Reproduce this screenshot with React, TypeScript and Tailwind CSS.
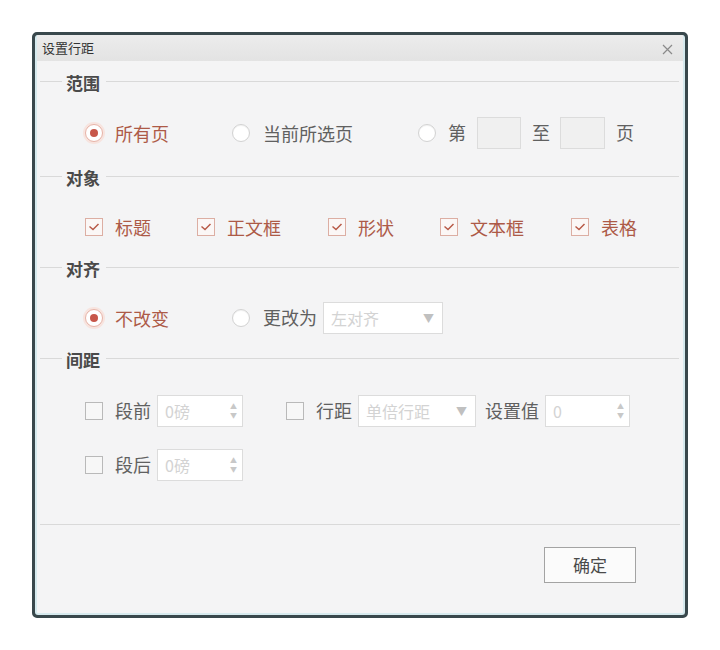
import type { ReactNode } from "react";

const font = { fontFamily: '"Noto Sans CJK SC", "Noto Sans", sans-serif' };

function Radio({ on }: { on?: boolean }) {
  return on ? (
    <span className="grid h-[18px] w-[18px] shrink-0 place-items-center rounded-full border border-[#e7b3a7] bg-white shadow-[0_0_0_2px_#f7e4df]">
      <span className="h-[8px] w-[8px] rounded-full bg-[#c7574a]" />
    </span>
  ) : (
    <span className="h-[18px] w-[18px] shrink-0 rounded-full border border-[#d2d2d2] bg-white shadow-[inset_0_1px_1px_rgba(0,0,0,0.06)]" />
  );
}

function Check({ on }: { on?: boolean }) {
  return (
    <span
      className={`grid h-[18px] w-[18px] shrink-0 place-items-center border ${
        on ? "border-[#dcaea3] bg-[#fbf7f6]" : "border-[#b9b9b9] bg-[#f7f7f7]"
      }`}
    >
      {on && (
        <svg width="12" height="10" viewBox="0 0 12 10" fill="none">
          <path d="M1.5 4.5 L5 7.5 L10.5 2" stroke="#b85a48" strokeWidth="1.5" />
        </svg>
      )}
    </span>
  );
}

function Section({ title }: { title: string }) {
  return (
    <div className="flex h-6 items-center">
      <div className="ml-[3px] h-px w-[22px] bg-[#d9d9d9]" />
      <span className="ml-[4px] mt-[3px] text-[17px] font-bold text-[#4a4a4a]">{title}</span>
      <div className="ml-[6px] mr-[4px] h-px flex-1 bg-[#d9d9d9]" />
    </div>
  );
}

function Spin({ value, w }: { value: string; w: string }) {
  return (
    <div className={`flex h-8 ${w} items-center justify-between border border-[#dcdcdc] bg-white pl-[7px] pr-[5px]`}>
      <span className="text-[16px] text-[#d3d3d3]">{value}</span>
      <span className="flex flex-col gap-[2px] text-[7px] leading-[7px] text-[#c8c8c8]">
        <span>▲</span>
        <span>▼</span>
      </span>
    </div>
  );
}

function Select({ value, w }: { value: string; w: string }) {
  return (
    <div className={`flex h-8 ${w} items-center justify-between border border-[#dcdcdc] bg-white pl-[7px] pr-[8px]`}>
      <span className="text-[16px] text-[#d3d3d3]">{value}</span>
      <span className="text-[11px] text-[#c0c0c0]">▼</span>
    </div>
  );
}

function Label({ children, red }: { children: ReactNode; red?: boolean }) {
  return <span className={`text-[18px] leading-none ${red ? "text-[#ad5a47]" : "text-[#606060]"}`}>{children}</span>;
}

export default function App() {
  return (
    <div className="min-h-[650px] bg-white pl-8 pt-8" style={font}>
      <div className="h-[586px] w-[656px] rounded-[5px] border-[3px] border-[#39484c] bg-[#39484c]">
        <div className="flex h-full flex-col overflow-hidden rounded-[3px] border-x-2 border-b-2 border-[#d6eaee] bg-[#f4f4f5]">
          <div className="flex h-[26px] items-center justify-between bg-gradient-to-b from-[#ececec] to-[#e3e3e3] pl-[5px] pr-[10px]">
            <span className="text-[13px] text-[#333]">设置行距</span>
            <svg width="11" height="11" viewBox="0 0 11 11" className="mt-[2px]">
              <path d="M1 1 L10 10 M10 1 L1 10" stroke="#8a8a8a" strokeWidth="1.2" />
            </svg>
          </div>

          <div className="flex flex-1 flex-col pt-[8px]">
            <Section title="范围" />
            <div className="mt-[24px] flex h-8 items-center pl-[48px]">
              <div className="flex w-[147px] items-center gap-[12px]">
                <Radio on />
                <Label red>所有页</Label>
              </div>
              <div className="flex w-[186px] items-center gap-[13px]">
                <Radio />
                <Label>当前所选页</Label>
              </div>
              <Radio />
              <span className="ml-[12px]"><Label>第</Label></span>
              <div className="ml-[11px] h-8 w-[44px] border border-[#dcdcdc] bg-[#f0f0f0]" />
              <span className="ml-[11px]"><Label>至</Label></span>
              <div className="ml-[10px] h-8 w-[45px] border border-[#dcdcdc] bg-[#f0f0f0]" />
              <span className="ml-[11px]"><Label>页</Label></span>
            </div>

            <div className="mt-[15px]">
              <Section title="对象" />
            </div>
            <div className="mt-[23px] flex h-8 items-center pl-[48px]">
              {[
                ["标题", "w-[112px]"],
                ["正文框", "w-[131px]"],
                ["形状", "w-[112px]"],
                ["文本框", "w-[131px]"],
                ["表格", ""],
              ].map(([t, w]) => (
                <div key={t} className={`flex items-center gap-[12px] ${w}`}>
                  <Check on />
                  <Label red>{t}</Label>
                </div>
              ))}
            </div>

            <div className="mt-[12px]">
              <Section title="对齐" />
            </div>
            <div className="mt-[23px] flex h-8 items-center pl-[48px]">
              <div className="flex w-[147px] items-center gap-[12px]">
                <Radio on />
                <Label red>不改变</Label>
              </div>
              <Radio />
              <span className="ml-[13px]"><Label>更改为</Label></span>
              <div className="ml-[6px]">
                <Select value="左对齐" w="w-[120px]" />
              </div>
            </div>

            <div className="mt-[12px]">
              <Section title="间距" />
            </div>
            <div className="mt-[25px] flex h-8 items-center pl-[48px]">
              <Check />
              <span className="ml-[12px]"><Label>段前</Label></span>
              <div className="ml-[6px]"><Spin value="0磅" w="w-[86px]" /></div>
              <div className="ml-[43px]"><Check /></div>
              <span className="ml-[12px]"><Label>行距</Label></span>
              <div className="ml-[6px]"><Select value="单倍行距" w="w-[118px]" /></div>
              <span className="ml-[9px]"><Label>设置值</Label></span>
              <div className="ml-[6px]"><Spin value="0" w="w-[85px]" /></div>
            </div>
            <div className="mt-[22px] flex h-8 items-center pl-[48px]">
              <Check />
              <span className="ml-[12px]"><Label>段后</Label></span>
              <div className="ml-[6px]"><Spin value="0磅" w="w-[86px]" /></div>
            </div>

            <div className="mx-[3px] mt-[43px] h-px bg-[#d9d9d9]" />
            <div className="mt-[22px] flex justify-end pr-[47px]">
              <button className="h-[36px] w-[92px] border border-[#a3a3a3] bg-[#fbfbfb] text-[17px] text-[#4a4a4a]">
                确定
              </button>
            </div>
          </div>
        </div>
      </div>
    </div>
  );
}
